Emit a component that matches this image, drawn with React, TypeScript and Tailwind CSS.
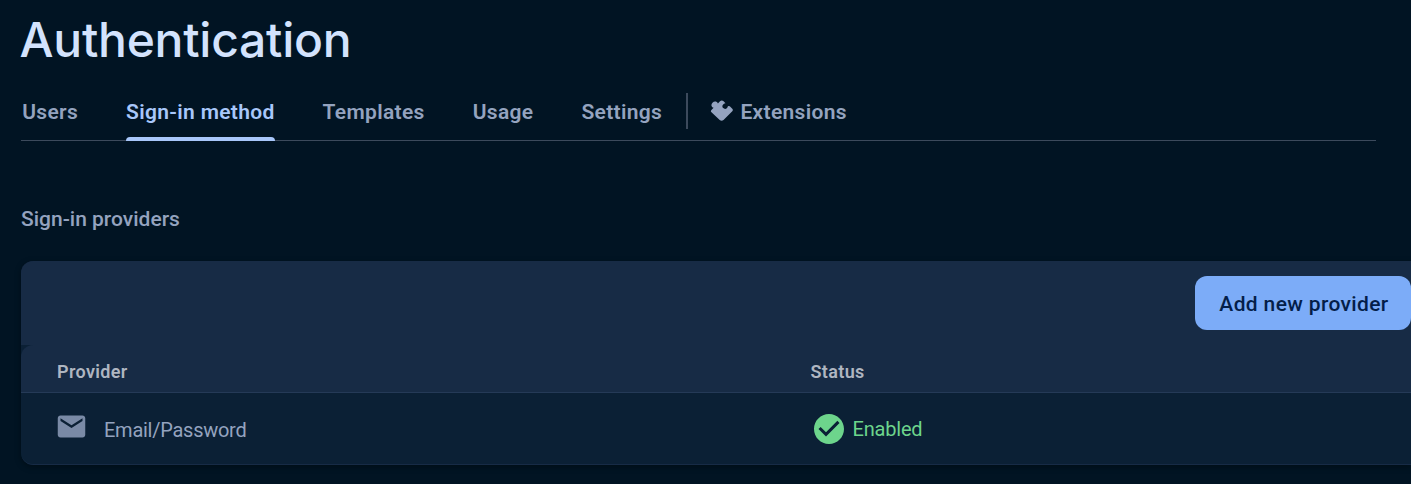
const tabs = ['Users', 'Sign-in method', 'Templates', 'Usage', 'Settings'];

export default function App() {
  return (
    <div className="h-[484px] w-full overflow-hidden bg-[#011423] pl-[21px] font-['Roboto',sans-serif] text-[#94a3bf]">
      <h1 className="-ml-[1.5px] h-[80px] pt-[10px] font-['Inter',sans-serif] text-[48px] leading-[60px] font-medium tracking-[-0.25px] text-[#d3e3fd]">
        Authentication
      </h1>
      <nav className="mr-[35px] flex h-[61px] border-b border-[#3c4a5c] text-[21px] leading-[30px] font-semibold tracking-[0.32px]">
        <div className="-mb-px flex gap-12 pl-[1.2px]">
          {tabs.map((t) => (
            <div key={t} className={t === 'Sign-in method' ? 'flex flex-col justify-between text-[#a8c7fa]' : ''}>
              <div className="pt-[17px]">{t}</div>
              {t === 'Sign-in method' && <div className="h-1 rounded-t-[4px] bg-[#a8c7fa]" />}
            </div>
          ))}
        </div>
        <div className="mt-[13px] ml-6 h-9 w-0.5 bg-[#3c4a5c]" />
        <div className="ml-[22.300px] flex pt-[17px]">
          <svg viewBox="7 5 24 24" className="mt-[2px] mr-[6px] size-6" fill="currentColor">
            <path d="M8.200 16.200L10.600 13.700C8.200 13.100 7.800 10.400 9.500 8.700C11.200 7 13.900 7.200 14.900 9.500L17 7.300Q18.800 5.800 20.600 7.300L22.500 9.300C19.500 10.100 18.600 12.500 20.200 14.100C21.800 15.700 24.300 15 25 11.900L26.800 12.300L29.500 15Q30.300 16 29.500 17L20.500 26Q18.600 27.500 16.700 26L8.200 18Q7.400 17.100 8.200 16.200Z" />
          </svg>
          Extensions
        </div>
      </nav>
      <h2 className="mt-[63px] text-[21px] leading-[30px] font-medium">Sign-in providers</h2>
      <section className="mt-[27px] h-[204px] overflow-hidden rounded-l-[12px] bg-[#0b2035] shadow-[0_2px_6px_rgba(0,0,0,0.35)]">
        <div className="flex h-[84px] justify-end bg-[#172b45] pt-[15px]">
          <button className="h-[54px] w-[216px] rounded-[12px] bg-[#7cacf8] pt-[3px] pl-0.5 text-[21px] font-medium tracking-[0.36px] text-[#041e49]">Add new provider</button>
        </div>
        <div className="flex h-[48px] rounded-tl-[12px] border-b border-[#253a57] bg-[#172b45] pt-[13px] pl-9 text-[18px] leading-[28px] font-semibold tracking-[0.36px] text-[#afb6c1]">
          <div className="w-[753.500px]">Provider</div>
          <div>Status</div>
        </div>
        <div className="flex h-[72px] rounded-bl-[12px] border-b border-[#172b46] pl-[33px] text-[20px]">
          <div className="flex w-[756.500px]">
            <svg viewBox="0 0 24 24" className="mt-[16.500px] mr-[16px] ml-px size-[33px]" fill="#7a8aa6">
              <path d="M20 4H4c-1.100 0-1.990.9-1.990 2L2 18c0 1.100.9 2 2 2h16c1.100 0 2-.9 2-2V6c0-1.100-.9-2-2-2zm0 4l-8 5-8-5V6l8 5 8-5v2z" />
            </svg>
            <span className="pt-[22px] leading-[30px] tracking-[-0.26px]">Email/Password</span>
          </div>
          <div className="flex text-[#6dd58c]">
            <svg viewBox="0 0 24 24" className="mt-[18px] mr-[6px] size-9" fill="currentColor">
              <path d="M12 2C6.480 2 2 6.480 2 12s4.480 10 10 10 10-4.480 10-10S17.520 2 12 2zm-2 15l-5-5 1.410-1.410L10 14.170l7.590-7.590L19 8l-9 9z" />
            </svg>
            <span className="leading-[30px] pt-[21px] tracking-[-0.2px]">Enabled</span>
          </div>
        </div>
      </section>
    </div>
  );
}
